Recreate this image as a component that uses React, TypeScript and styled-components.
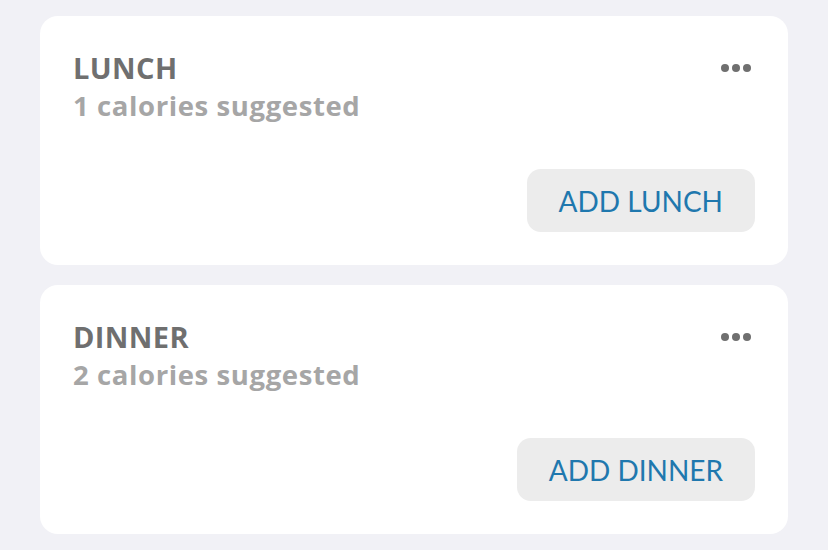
import styled, { createGlobalStyle } from "styled-components";

const GlobalStyle = createGlobalStyle`
  html, body {
    margin: 0;
    padding: 0;
    background: #f1f1f6;
  }
  body {
    font-family: Lato, "Open Sans", "Liberation Sans", sans-serif;
  }
`;

const Page = styled.div`
  display: flex;
  flex-direction: column;
  gap: 20px;
  padding: 16px 40px;
  width: 828px;
  box-sizing: border-box;
`;

const Card = styled.div`
  background: #ffffff;
  border-radius: 18px;
  height: 249px;
  box-sizing: border-box;
  padding: 33px;
  display: flex;
  flex-direction: column;
  justify-content: space-between;
`;

const Header = styled.div`
  display: flex;
  justify-content: space-between;
  align-items: flex-start;
`;

const TitleBlock = styled.div`
  display: flex;
  flex-direction: column;
`;

const Title = styled.div`
  font-family: "Open Sans", Lato, sans-serif;
  font-size: 29px;
  font-weight: 700;
  color: #6f6f6f;
  line-height: 38px;
  letter-spacing: 0.4px;
`;

const Subtitle = styled.div`
  font-family: "Open Sans", Lato, sans-serif;
  font-size: 27.5px;
  font-weight: 700;
  color: #a6a6a6;
  line-height: 38px;
  letter-spacing: 0.6px;
`;

const Dots = styled.div`
  display: flex;
  gap: 3px;
  margin-top: 15px;
  margin-right: 4px;
`;

const Dot = styled.span`
  width: 8px;
  height: 8px;
  border-radius: 50%;
  background: #6f6f6f;
`;

const Footer = styled.div`
  display: flex;
  justify-content: flex-end;
`;

const AddButton = styled.button`
  height: 63px;
  padding: 0 32px;
  border: none;
  border-radius: 14px;
  background: #ececec;
  color: #1f78ae;
  font-family: Lato, "Open Sans", "Liberation Sans", sans-serif;
  font-size: 28px;
  font-weight: 400;
`;

interface IMeal {
  name: string;
  calories: number;
}

const meals: IMeal[] = [
  { name: "LUNCH", calories: 1 },
  { name: "DINNER", calories: 2 },
];

const App = () => {
  return (
    <>
      <GlobalStyle />
      <Page>
        {meals.map(({ name, calories }) => (
          <Card key={name}>
            <Header>
              <TitleBlock>
                <Title>{name}</Title>
                <Subtitle>{calories} calories suggested</Subtitle>
              </TitleBlock>
              <Dots>
                <Dot />
                <Dot />
                <Dot />
              </Dots>
            </Header>
            <Footer>
              <AddButton>ADD {name}</AddButton>
            </Footer>
          </Card>
        ))}
      </Page>
    </>
  );
};

export default App;
